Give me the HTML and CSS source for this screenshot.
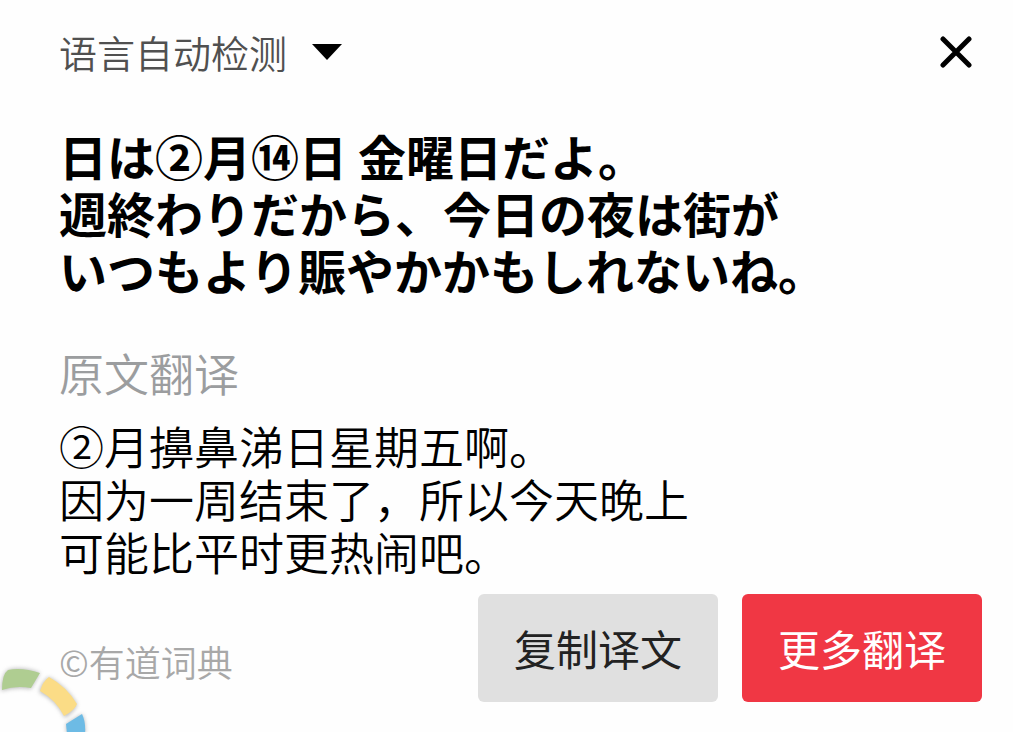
FILE: index.html
```html
<!DOCTYPE html>
<html lang="zh-CN">
<head>
  <meta charset="UTF-8" />
  <meta name="viewport" content="width=device-width, initial-scale=1" />
  <title>有道词典</title>
  <link rel="stylesheet" href="styles.css">
</head>
<body>

  <main class="card">
    <!-- Language picker and close button -->
    <header class="header">
      <div class="picker">
        <select class="language" aria-label="语言">
          <option>语言自动检测</option>
        </select>
        <svg class="arrow" viewBox="0 0 30 16" aria-hidden="true"><path d="M0 0h30L15 16z"/></svg>
      </div>
      <button class="close" type="button" aria-label="关闭">
        <svg viewBox="0 0 32 32" aria-hidden="true"><path d="M3 3l26 26M29 3L3 29"/></svg>
      </button>
    </header>

    <!-- Source text -->
    <p class="source" lang="ja">日は②月⑭日 金曜日だよ。<br>週終わりだから、今日の夜は街が<br>いつもより賑やかかもしれないね。</p>

    <!-- Translation -->
    <h2 class="label">原文翻译</h2>
    <p class="result">②月擤鼻涕日星期五啊。<br>因为一周结束了，所以今天晚上<br>可能比平时更热闹吧。</p>

    <footer class="footer">
      <small class="credit">©有道词典</small>
      <div class="actions">
        <button class="btn" type="button">复制译文</button>
        <button class="btn primary" type="button">更多翻译</button>
      </div>
    </footer>
  </main>

  <!-- Floating ring in the corner -->
  <svg class="ring" viewBox="0 0 90 70" aria-hidden="true">
    <g class="ring-shadow">
      <path d="M1 29Q2 12 8 8Q22 4 40 11L31 27Q16 24 1 29z"/>
      <path d="M49 15Q67 25 77 42Q76 48 65 56Q57 39 39 30Q42 19 49 15z"/>
      <path d="M82 52Q86 60 85 72H67L66 62z"/>
    </g>
    <path fill="#afcd91" d="M2 28Q2 12 8 8Q22 5 40 11L31 26Q16 23 2 28z"/>
    <path fill="#fbdc86" d="M49 15Q67 25 77 42Q75 48 64 54Q56 38 40 29Q43 19 49 15z"/>
    <path fill="#6dbbe5" d="M82 52Q86 60 85 72H67L66 62z"/>
  </svg>

</body>
</html>
```

FILE: styles.css
```css
* {
  box-sizing: border-box;
  margin: 0;
  padding: 0;
}
body {
  background: #fefefe;
  color: #000;
  font-family: "Noto Sans CJK SC", sans-serif;
  overflow: hidden;
}
button, select {
  border: 0;
  font-family: inherit;
  cursor: pointer;
}
.card {
  padding: 24px 31px 30px 59px;
}
/* Language picker and close button */
.header {
  display: flex;
  align-items: center;
  justify-content: space-between;
  height: 56px;
}
.picker {
  display: flex;
  align-items: center;
  gap: 24px;
}
.language {
  appearance: none;
  background: none;
  color: #505050;
  font-size: 38px;
  font-weight: 350;
  line-height: 54px;
}
.arrow {
  width: 30px;
  height: 16px;
}
.close {
  width: 52px;
  height: 52px;
  padding: 10px;
  background: none;
}
.close svg {
  display: block;
  fill: none;
  stroke: #000;
  stroke-width: 5;
  stroke-linecap: round;
}
/* Texts */
.source {
  margin-top: 47px;
  font-family: "Noto Sans CJK JP", sans-serif;
  font-size: 48px;
  font-weight: 700;
  line-height: 57px;
}
.label {
  margin-top: 45px;
  color: #9b9d9f;
  font-size: 45px;
  font-weight: 350;
  line-height: 60px;
}
.result {
  margin-top: 16px;
  font-size: 45px;
  font-weight: 350;
  line-height: 53px;
}
/* Bottom row */
.footer {
  display: flex;
  align-items: center;
  justify-content: space-between;
  margin-top: 16px;
}
.credit {
  padding-top: 26px;
  color: #a8a8a8;
  font-size: 36px;
  font-weight: 350;
  line-height: 48px;
}
.actions {
  display: flex;
  gap: 24px;
}
.btn {
  width: 240px;
  height: 108px;
  padding-bottom: 2px;
  border-radius: 6px;
  background: #e0e0e0;
  color: #222;
  font-size: 42px;
}
.primary {
  background: #f03744;
  color: #fff;
}
/* Floating ring, cut off by the window corner */
.ring {
  position: fixed;
  left: 0;
  bottom: 0;
  width: 90px;
  height: 70px;
}
.ring-shadow {
  fill: #777;
  opacity: 0.5;
  filter: blur(2px);
}
```
